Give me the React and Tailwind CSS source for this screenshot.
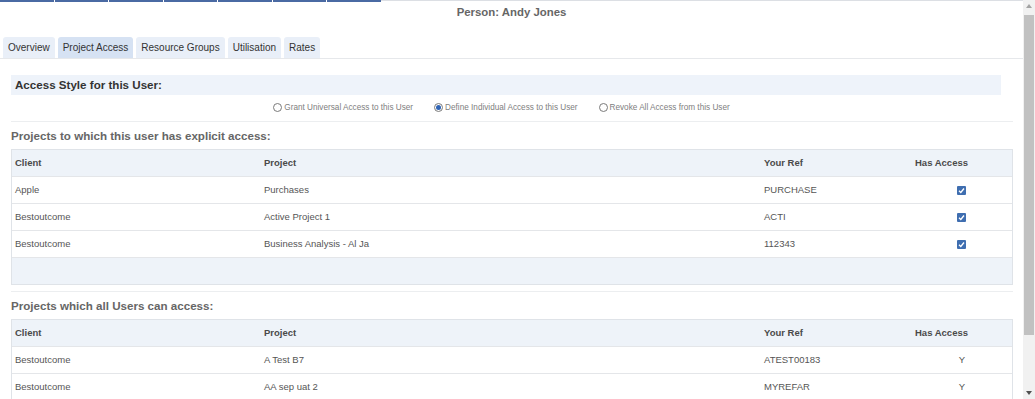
import React from "react";

const font = { fontFamily: '"Liberation Sans", Arial, sans-serif' };

function Check() {
  return (
    <span className="inline-flex h-[9px] w-[9px] items-center justify-center rounded-[1px] bg-[#3f6eb0]">
      <svg width="7" height="7" viewBox="0 0 7 7">
        <path d="M1 3.8 L2.8 5.5 L6 1.5" fill="none" stroke="white" strokeWidth="1.3" />
      </svg>
    </span>
  );
}

function Radio({ checked, label }) {
  return (
    <div className="flex items-center gap-[2px]">
      <span className="flex h-[9px] w-[9px] items-center justify-center rounded-full border border-[#7a7a7a] bg-white">
        {checked && <span className="h-[5px] w-[5px] rounded-full bg-[#2f64b5]" />}
      </span>
      <span className="text-[8.2px] text-[#808080]">{label}</span>
    </div>
  );
}

function DataTable({ rows, footer }) {
  return (
    <div className="ml-[11px] mr-[10px] border border-[#dfe3e8]">
      <div className="grid h-[26px] grid-cols-[249px_500px_1fr_160px] items-center bg-[#eef3f9] text-[9.5px] font-bold text-[#4a4a4a]">
        <div className="pl-[3px]">Client</div>
        <div className="pl-[3px]">Project</div>
        <div className="pl-[3px]">Your Ref</div>
        <div className="pr-[44px] text-right">Has Access</div>
      </div>
      {rows.map((r, i) => (
        <div
          key={i}
          className="grid h-[27px] grid-cols-[249px_500px_1fr_160px] items-center border-t border-[#e4e6e9] bg-white text-[9.5px] text-[#555]"
        >
          <div className="pl-[3px]">{r[0]}</div>
          <div className="pl-[3px]">{r[1]}</div>
          <div className="pl-[3px]">{r[2]}</div>
          <div className="flex justify-end pr-[46px]">
            {r[3] === "check" ? <Check /> : <span className="pr-[1px]">{r[3]}</span>}
          </div>
        </div>
      ))}
      {footer && <div className="h-[27px] border-t border-[#e4e6e9] bg-[#eef3f9]" />}
    </div>
  );
}

export default function App() {
  const tabs = ["Overview", "Project Access", "Resource Groups", "Utilisation", "Rates"];
  return (
    <div className="flex h-[399px] w-[1035px] overflow-hidden bg-white" style={font}>
      <div className="min-w-0 flex-1 overflow-hidden">
        <div className="flex h-[2px] items-stretch">
          <div className="flex w-[381px] gap-[1px]">
            {Array.from({ length: 7 }).map((_, i) => (
              <div key={i} className="flex-1 bg-[#4a6aa3]" />
            ))}
          </div>
          <div className="flex-1 border-t border-[#dcdfe4]" />
        </div>
        <div className="flex h-[21px] items-center justify-center text-[11.4px] font-bold text-[#666]">
          Person: Andy Jones
        </div>
        <div className="mt-[14px] flex gap-[3px] border-b border-[#e6e8eb] pl-[3px]">
          {tabs.map((t) => (
            <div
              key={t}
              className={
                "flex h-[21px] items-center rounded-t-[3px] px-[5px] text-[10px] text-[#333] " +
                (t === "Project Access" ? "bg-[#d6e2f3]" : "bg-[#e9eff8]")
              }
            >
              {t}
            </div>
          ))}
        </div>
        <div className="ml-[11px] mr-[22px] mt-[16px] flex h-[20px] items-center bg-[#eef3fa] pl-[4px] text-[11.6px] font-bold text-[#333]">
          Access Style for this User:
        </div>
        <div className="ml-[11px] mr-[10px] flex h-[27px] items-center justify-center gap-[21px] border-b border-[#eceef0] pr-[21px]">
          <Radio label="Grant Universal Access to this User" />
          <Radio checked label="Define Individual Access to this User" />
          <Radio label="Revoke All Access from this User" />
        </div>
        <div className="flex h-[27px] items-center pl-[11px] text-[11.6px] font-bold text-[#666]">
          Projects to which this user has explicit access:
        </div>
        <DataTable
          footer
          rows={[
            ["Apple", "Purchases", "PURCHASE", "check"],
            ["Bestoutcome", "Active Project 1", "ACTI", "check"],
            ["Bestoutcome", "Business Analysis - Al Ja", "112343", "check"],
          ]}
        />
        <div className="ml-[11px] mr-[10px] mt-[6px] border-b border-[#eceef0]" />
        <div className="flex h-[27px] items-center pl-[11px] text-[11.6px] font-bold text-[#666]">
          Projects which all Users can access:
        </div>
        <DataTable
          rows={[
            ["Bestoutcome", "A Test B7", "ATEST00183", "Y"],
            ["Bestoutcome", "AA sep uat 2", "MYREFAR", "Y"],
          ]}
        />
      </div>
      <div className="flex w-[12px] flex-col items-center bg-[#f1f1f1]">
        <div className="flex h-[12px] items-center justify-center">
          <svg width="6" height="4" viewBox="0 0 6 4">
            <path d="M0 4 L3 0 L6 4 Z" fill="#a3a3a3" />
          </svg>
        </div>
        <div className="mt-[3px] h-[320px] w-[10px] bg-[#c1c1c1]" />
        <div className="flex-1" />
        <div className="flex h-[12px] items-center justify-center">
          <svg width="6" height="4" viewBox="0 0 6 4">
            <path d="M0 0 L6 0 L3 4 Z" fill="#505050" />
          </svg>
        </div>
      </div>
    </div>
  );
}
